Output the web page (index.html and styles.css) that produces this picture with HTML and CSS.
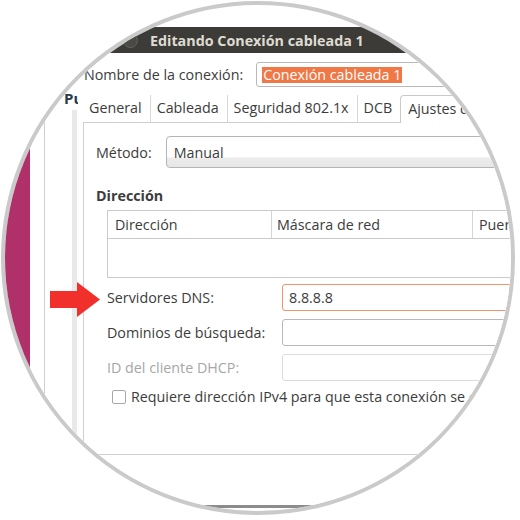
FILE: index.html
```html
<!DOCTYPE html>
<html lang="es">
<head>
    <meta charset="UTF-8">
    <title>Editando Conexión cableada 1</title>
    <link rel="stylesheet" href="styles.css">
</head>
<body>

    <!-- Round magnifier over the screenshot -->
    <div class="lens">
        <div class="scene">

            <!-- Desktop and the settings window behind the dialog -->
            <div class="desk"></div>
            <div class="parent">
                <div class="pane"></div>
                <div class="list"><span class="peek">Pu</span></div>
                <div class="strip"></div>
            </div>

            <!-- Connection editor dialog -->
            <div class="dialog">
                <div class="titlebar">
                    <span class="close-btn"></span>
                    <span class="title">Editando Conexión cableada 1</span>
                </div>

                <div class="dialog-body">
                    <div class="name-row">
                        <label class="label">Nombre de la conexión:</label>
                        <div class="entry"><span class="selected">Conexión cableada 1</span></div>
                    </div>

                    <div class="tabs">
                        <span class="tab">General</span>
                        <span class="tab">Cableada</span>
                        <span class="tab">Seguridad 802.1x</span>
                        <span class="tab">DCB</span>
                        <span class="tab active">Ajustes de IPv4</span>
                    </div>

                    <div class="panel">
                        <div class="method-row">
                            <span class="label">Método:</span>
                            <div class="combo">Manual</div>
                        </div>

                        <h3 class="section">Dirección</h3>

                        <div class="addr-table">
                            <div class="thead">
                                <span class="th th-addr">Dirección</span>
                                <span class="th th-mask">Máscara de red</span>
                                <span class="th th-gw">Puerta de enlace</span>
                            </div>
                        </div>

                        <div class="form">
                            <span class="label">Servidores DNS:</span>
                            <div class="entry focus">8.8.8.8</div>
                            <span class="label">Dominios de búsqueda:</span>
                            <div class="entry"></div>
                            <span class="label disabled">ID del cliente DHCP:</span>
                            <div class="entry off"></div>
                        </div>

                        <div class="check-row">
                            <span class="checkbox"></span>
                            <span class="label">Requiere dirección IPv4 para que esta conexión se complete</span>
                        </div>
                    </div>

                    <div class="dialog-foot"></div>
                </div>
            </div>

            <!-- Red pointer -->
            <svg class="arrow" width="52" height="38" viewBox="0 0 52 38">
                <polygon points="0,9 27,9 27,0 50,17.5 27,35 27,26 0,26" fill="#f2302b"/>
            </svg>
        </div>
    </div>

</body>
</html>
```

FILE: styles.css
```css
/* Page */
body {
    margin: 0;
    background-color: #fff;
    font-family: 'Open Sans', 'Noto Sans', sans-serif;
    font-size: 14.3px;
    color: #3c3c3c;
}

/* Round lens */
.lens {
    width: 506px;
    height: 506px;
    margin: 1px;
    border: 4px solid #cacaca;
    border-radius: 50%;
    overflow: hidden;
    background-color: #fff;
}

.scene {
    position: relative;
    display: flex;
    height: 100%;
}

/* Background desktop */
.desk {
    flex: none;
    width: 25px;
    background-color: #b0306a;
}

.parent {
    flex: none;
    display: flex;
    width: 48px;
    background-color: #fff;
}

.pane {
    width: 14px;
}

.list {
    width: 27px;
    border-left: 1px solid #cfcfcf;
    white-space: nowrap;
}

.peek {
    display: block;
    padding: 83px 0 0 19px;
    font-weight: bold;
    font-size: 15px;
    color: #2b3a4c;
}

.strip {
    width: 5px;
    margin-top: 105px;
    margin-right: 1px;
    background-color: #e9e9e9;
}

/* Dialog */
.dialog {
    flex: none;
    width: 480px;
    margin-top: 22px;
}

.titlebar {
    display: flex;
    align-items: center;
    height: 26px;
    background-color: #3c3b37;
    white-space: nowrap;
}

.close-btn {
    width: 13px;
    height: 13px;
    margin-left: 45px;
    border-radius: 50%;
    background-color: #4a4945;
    border: 1px solid #64635e;
}

.title {
    margin-left: 12px;
    font-weight: bold;
    color: #dfdbd2;
}

.dialog-body {
    background-color: #fff;
    white-space: nowrap;
}

.name-row {
    display: flex;
    align-items: center;
    padding: 9px 0 0 6px;
}

.name-row .entry {
    margin-left: 13px;
    flex: 1;
}

.entry {
    height: 25px;
    box-sizing: border-box;
    border: 1px solid #b8b8b8;
    border-radius: 3px;
    padding-left: 6px;
    display: flex;
    align-items: center;
    background-color: #fff;
}

.selected {
    display: inline-block;
    height: 16px;
    line-height: 16px;
    padding: 0 1px;
    margin-left: -1px;
    background-color: #f07746;
    color: #fff;
}

/* Tabs */
.tabs {
    display: flex;
    margin: 8px 0 0 5px;
    height: 27px;
    align-items: stretch;
}

.tab {
    display: flex;
    align-items: center;
    padding: 0 8px 2px 6px;
}

.tab + .tab {
    border-left: 1px solid #d8d8d8;
}

.tab.active {
    border: 1px solid #cacaca;
    border-bottom: none;
    border-radius: 4px 4px 0 0;
    margin-bottom: -1px;
    padding-left: 7px;
    background-color: #fff;
    position: relative;
}

/* Notebook page */
.panel {
    margin-left: 5px;
    height: 331px;
    border: 1px solid #cfcfcf;
    border-right: none;
}

.method-row {
    display: flex;
    align-items: center;
    margin-top: 13px;
    padding-left: 12px;
}

.combo {
    flex: 1;
    margin-left: 14px;
    height: 32px;
    box-sizing: border-box;
    border: 1px solid #b4b4b4;
    border-radius: 4px;
    padding-left: 7px;
    display: flex;
    align-items: center;
    background: linear-gradient(#fff 0, #fff 66%, #ececec 70%, #e6e6e6 100%);
}

.section {
    margin: 18px 0 0 12px;
    font-size: 14.3px;
    line-height: 20px;
}

.addr-table {
    margin: 4px 0 0 23px;
    height: 66px;
    border: 1px solid #cacaca;
    border-right: none;
}

.thead {
    display: flex;
    height: 27px;
    border-bottom: 1px solid #cacaca;
}

.th {
    flex: none;
    display: flex;
    align-items: center;
    box-sizing: border-box;
    padding-left: 7px;
}

.th-addr {
    width: 163px;
}

.th-mask {
    width: 201px;
    border-left: 1px solid #d4d4d4;
    padding-left: 5px;
}

.th-gw {
    border-left: 1px solid #d4d4d4;
    padding-left: 6px;
}

/* DNS form */
.form {
    display: grid;
    grid-template-columns: 175px 1fr;
    row-gap: 8px;
    align-items: center;
    margin: 6px 0 0 23px;
}

.form .entry {
    height: 27px;
}

.entry.focus {
    border-color: #f3936a;
}

.entry.off {
    border-color: #dcdcdc;
}

.label.disabled {
    color: #a7a7a7;
}

.check-row {
    display: flex;
    align-items: center;
    margin: 6px 0 0 28px;
}

.checkbox {
    width: 12px;
    height: 12px;
    border: 1px solid #a8a8a8;
    border-radius: 2px;
    margin-right: 5px;
}

.dialog-foot {
    height: 50px;
    border-bottom: 3px solid #8c8c8c;
}

/* Pointer over the form */
.arrow {
    position: absolute;
    left: 45px;
    top: 277px;
}
```
